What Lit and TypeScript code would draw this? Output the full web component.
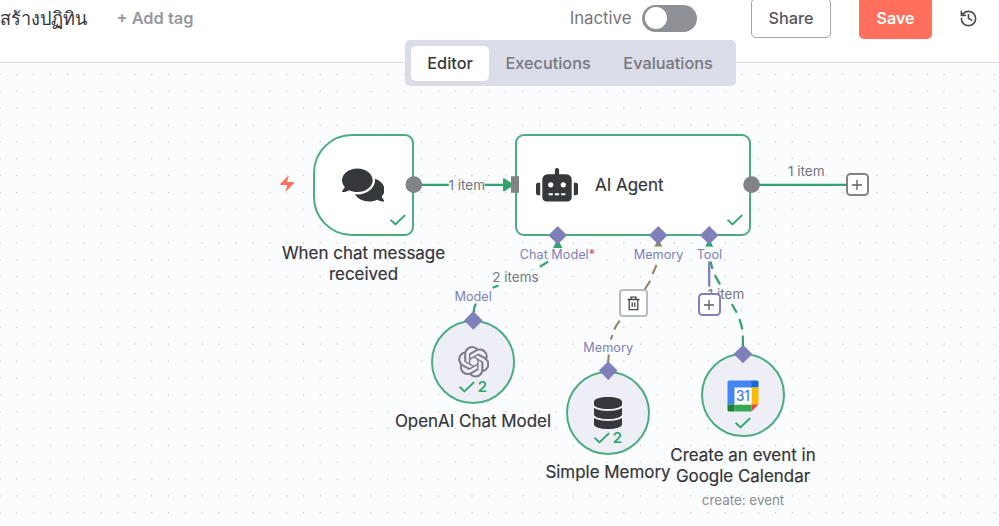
import { LitElement, html, svg, css } from "lit";
import { customElement } from "lit/decorators.js";
import { styleMap } from "lit/directives/style-map.js";

const OPENAI =
  "M22.2819 9.8211a5.9847 5.9847 0 0 0-.5157-4.9108 6.0462 6.0462 0 0 0-6.5098-2.9A6.0651 6.0651 0 0 0 4.9807 4.1818a5.9847 5.9847 0 0 0-3.9977 2.9 6.0462 6.0462 0 0 0 .7427 7.0966 5.98 5.98 0 0 0 .511 4.9107 6.051 6.051 0 0 0 6.5146 2.9001A5.9847 5.9847 0 0 0 13.2599 24a6.0557 6.0557 0 0 0 5.7718-4.2058 5.9894 5.9894 0 0 0 3.9977-2.9001 6.0557 6.0557 0 0 0-.7475-7.0729zm-9.022 12.6081a4.4755 4.4755 0 0 1-2.8764-1.0408l.1419-.0804 4.7783-2.7582a.7948.7948 0 0 0 .3927-.6813v-6.7369l2.02 1.1686a.071.071 0 0 1 .038.052v5.5826a4.504 4.504 0 0 1-4.4945 4.4944zm-9.6607-4.1254a4.4708 4.4708 0 0 1-.5346-3.0137l.142.0852 4.783 2.7582a.7712.7712 0 0 0 .7806 0l5.8428-3.3685v2.3324a.0804.0804 0 0 1-.0332.0615L9.74 19.9502a4.4992 4.4992 0 0 1-6.1408-1.6464zM2.3408 7.8956a4.485 4.485 0 0 1 2.3655-1.9728V11.6a.7664.7664 0 0 0 .3879.6765l5.8144 3.3543-2.0201 1.1685a.0757.0757 0 0 1-.071 0l-4.8303-2.7865A4.504 4.504 0 0 1 2.3408 7.872zm16.5963 3.8558L13.1038 8.364 15.1192 7.2a.0757.0757 0 0 1 .071 0l4.8303 2.7913a4.4944 4.4944 0 0 1-.6765 8.1042v-5.6772a.79.79 0 0 0-.407-.667zm2.0107-3.0231l-.142-.0852-4.7735-2.7818a.7759.7759 0 0 0-.7854 0L9.409 9.2297V6.8974a.0662.0662 0 0 1 .0284-.0615l4.8303-2.7866a4.4992 4.4992 0 0 1 6.6802 4.66zM8.3065 12.863l-2.02-1.1638a.0804.0804 0 0 1-.038-.0567V6.0742a4.4992 4.4992 0 0 1 7.3757-3.4537l-.142.0805L8.704 5.459a.7948.7948 0 0 0-.3927.6813zm1.0976-2.3654l2.602-1.4998 2.6069 1.4998v2.9994l-2.5974 1.4997-2.6067-1.4997Z";
const COMMENTS =
  "M416 192c0-88.4-93.1-160-208-160S0 103.6 0 192c0 34.3 14.1 65.9 38 92-13.4 30.2-35.5 54.2-35.8 54.5-2.2 2.3-2.8 5.7-1.5 8.7S4.8 352 8 352c36.6 0 66.9-12.3 88.7-25 32.2 15.7 70.3 25 111.3 25 114.9 0 208-71.6 208-160zm122 220c23.9-26 38-57.7 38-92 0-66.9-53.5-124.2-129.3-148.1.9 6.6 1.3 13.3 1.3 20.1 0 105.9-107.7 192-240 192-10.8 0-21.3-.8-31.7-1.9C207.8 439.6 281.8 480 368 480c41 0 79.1-9.2 111.3-25 21.8 12.7 52.1 25 88.7 25 3.2 0 6.1-1.9 7.3-4.8 1.3-2.9.7-6.3-1.5-8.7-.3-.3-22.4-24.2-35.8-54.5z";
const ROBOT =
  "M32,224H64V416H32A32,32,0,0,1,0,384V256A32,32,0,0,1,32,224Zm512-48V448a64,64,0,0,1-64,64H160a64,64,0,0,1-64-64V176a80,80,0,0,1,80-80H288V32a32,32,0,0,1,64,0V96H464A80,80,0,0,1,544,176ZM264,256a40,40,0,1,0-40,40A40,40,0,0,0,264,256Zm-8,128H192v32h64Zm96,0H288v32h64ZM456,256a40,40,0,1,0-40,40A40,40,0,0,0,456,256Zm-8,128H384v32h64ZM640,256V384a32,32,0,0,1-32,32H576V224h32A32,32,0,0,1,640,256Z";
const DATABASE =
  "M448 73.143v45.714C448 159.143 347.667 192 224 192S0 159.143 0 118.857V73.143C0 32.857 100.333 0 224 0s224 32.857 224 73.143zM448 176v102.857C448 319.143 347.667 352 224 352S0 319.143 0 278.857V176c48.125 33.143 136.208 48.572 224 48.572S399.874 209.143 448 176zm0 160v102.857C448 479.143 347.667 512 224 512S0 479.143 0 438.857V336c48.125 33.143 136.208 48.572 224 48.572S399.874 369.143 448 336z";

const at = (x: number, y: number) => styleMap({ left: `${x}px`, top: `${y}px` });

const check = html`<svg class="check" viewBox="0 0 16 12">
  <path d="M1.2 6.4 5.4 10.4 14.6 1.6" />
</svg>`;

const plus = html`<svg class="plus" viewBox="0 0 10 10"><path d="M5 0v10M0 5h10" /></svg>`;

interface Label {
  text: string;
  x: number;
  y: number;
  kind: string;
  required?: boolean;
}

const LABELS: Label[] = [
  { text: "1 item", x: 466.7, y: 185, kind: "items filled" },
  { text: "1 item", x: 806.3, y: 171, kind: "items" },
  { text: "2 items", x: 515.4, y: 277, kind: "items filled" },
  { text: "1 item", x: 726, y: 294, kind: "items filled" },
  { text: "Chat Model", x: 557.4, y: 254.4, kind: "port", required: true },
  { text: "Memory", x: 658.6, y: 254.4, kind: "port filled" },
  { text: "Tool", x: 709.4, y: 254.4, kind: "port filled" },
  { text: "Model", x: 473.2, y: 296.2, kind: "port filled" },
  { text: "Memory", x: 608.2, y: 347.4, kind: "port filled" },
];

const DIAMONDS = [
  [557.7, 235.3],
  [658.3, 235.3],
  [709.2, 235.3],
  [473.3, 320.4],
  [608.2, 370.6],
  [743, 354],
];

@customElement("app-root")
export class AppRoot extends LitElement {
  static styles = css`
    :host {
      display: flex;
      flex-direction: column;
      position: relative;
      width: 999px;
      height: 526px;
      overflow: hidden;
      background: #fff;
      font-family: Inter, "Noto Sans", sans-serif;
      color: #343538;
    }
    .header {
      box-sizing: border-box;
      flex: none;
      height: 63px;
      border-bottom: 1px solid #d9dbe9;
      background: #fff;
    }
    .bar {
      display: flex;
      align-items: center;
      height: 36px;
      font-size: 17px;
    }
    .title {
      width: 116.5px;
      white-space: nowrap;
      font-size: 18.1px;
      line-height: 24px;
    }
    .add {
      font-size: 16.4px;
      font-weight: 600;
      color: #97989d;
      margin-right: auto;
    }
    .status {
      font-size: 16.8px;
      color: #75767b;
      margin-right: 10.5px;
    }
    .toggle {
      display: flex;
      align-items: center;
      box-sizing: border-box;
      width: 55px;
      height: 27px;
      padding-left: 3px;
      border-radius: 14px;
      background: #909197;
      margin-right: 54px;
    }
    .knob {
      width: 22px;
      height: 22px;
      border-radius: 50%;
      background: #fff;
    }
    .btn {
      display: flex;
      align-items: center;
      justify-content: center;
      box-sizing: border-box;
      flex: none;
      font-size: 16.3px;
      font-weight: 500;
    }
    .share {
      width: 80px;
      height: 40px;
      border: 1px solid #a3a5b5;
      border-radius: 5px;
      color: #57585c;
      margin-right: 28px;
    }
    .save {
      width: 73px;
      height: 42px;
      border-radius: 5px;
      background: #ff6f5c;
      color: #fff;
      font-weight: 600;
      font-size: 16px;
      margin-right: 27px;
    }
    .history {
      width: 19px;
      height: 19px;
      margin-right: 21px;
      fill: none;
      stroke: #4d4e52;
      stroke-width: 2.1;
      stroke-linecap: round;
      stroke-linejoin: round;
    }
    .tabs {
      position: absolute;
      z-index: 2;
      left: 405px;
      top: 40px;
      display: flex;
      align-items: center;
      box-sizing: border-box;
      width: 331px;
      height: 46px;
      padding: 0 6px;
      border-radius: 5px;
      background: #dadce8;
      font-size: 16.3px;
      font-weight: 500;
      color: #77787e;
    }
    .tab {
      display: flex;
      align-items: center;
      justify-content: center;
      height: 35px;
      padding: 0 16.3px;
      border-radius: 5px;
    }
    .tab.on {
      background: #fff;
      color: #37383b;
    }
    .canvas {
      position: relative;
      flex: 1;
      background-color: #fbfcfe;
      background-image: radial-gradient(circle, #c3c5cc 0.5px, rgba(195, 197, 204, 0) 1.1px);
      background-size: 16.867px 16.867px;
      background-position: 8.4px 3px;
    }
    .layer {
      position: absolute;
      left: 0;
      top: -63px;
      width: 999px;
      height: 526px;
    }
    .node {
      position: absolute;
      box-sizing: border-box;
      border: 2px solid #4bac81;
      background: #fff;
    }
    .trigger {
      width: 101px;
      height: 102px;
      border-radius: 39px 9px 9px 39px;
    }
    .agent {
      width: 236px;
      height: 102px;
      border-radius: 9px;
    }
    .round {
      width: 84px;
      height: 84px;
      border-radius: 50%;
      background: #eeeef7;
    }
    .node svg.glyph {
      position: absolute;
      fill: #37383b;
    }
    .name {
      position: absolute;
      left: 78px;
      top: 37px;
      font-size: 16.95px;
      font-weight: 400;
      line-height: 24px;
      white-space: nowrap;
      -webkit-text-stroke: 0.2px #343538;
    }
    .check {
      width: 16px;
      height: 12px;
      fill: none;
      stroke: #30a46c;
      stroke-width: 2;
      stroke-linecap: round;
      stroke-linejoin: round;
    }
    .corner {
      position: absolute;
      right: 6px;
      bottom: 8px;
      display: flex;
    }
    .runs {
      position: absolute;
      left: 0;
      right: 0;
      bottom: 6px;
      display: flex;
      align-items: center;
      justify-content: center;
      gap: 3px;
      font-size: 15px;
      font-weight: 600;
      line-height: 18px;
      color: #30a46c;
    }
    .caption {
      position: absolute;
      transform: translateX(-50%);
      text-align: center;
      white-space: nowrap;
      font-size: 16.95px;
      font-weight: 400;
      line-height: 21px;
      -webkit-text-stroke: 0.2px #343538;
    }
    .sub {
      font-size: 13.4px;
      font-weight: 400;
      line-height: 26px;
      color: #8d8e94;
      -webkit-text-stroke: 0;
    }
    .label {
      position: absolute;
      transform: translate(-50%, -50%);
      white-space: nowrap;
      font-size: 13.5px;
      line-height: 15px;
    }
    .items {
      color: #75767b;
    }
    .port {
      font-size: 12.7px;
      color: #7f80ba;
    }
    .filled {
      background: rgba(251, 252, 254, 0.92);
    }
    .req {
      color: #e5414b;
    }
    .box {
      position: absolute;
      display: flex;
      align-items: center;
      justify-content: center;
      box-sizing: border-box;
      width: 23px;
      height: 23px;
      border: 2px solid #828388;
      border-radius: 4.5px;
      background: #fff;
    }
    .box.violet {
      border-color: #8182bb;
    }
    .box.trash {
      width: 29px;
      height: 28px;
      border: 2px solid #babbc1;
      border-radius: 4px;
    }
    .plus {
      width: 10px;
      height: 10px;
      fill: none;
      stroke: #5b5c60;
      stroke-width: 1.3;
    }
    .bin {
      width: 13px;
      height: 15px;
      fill: none;
      stroke: #45464a;
      stroke-width: 1.3;
    }
    .date {
      font-size: 14.5px;
      font-weight: 500;
      fill: #3f7de8;
      letter-spacing: -0.3px;
    }
  `;

  private edges() {
    return svg`
      <g fill="none" stroke="#30a46c" stroke-width="2.2">
        <path d="M414 184.8H505M751 184.8H846" />
        <path d="M473.8 312Q474 307 476 303M492.7 287.7 498.5 285.4M527.5 272.5 534 269.9M539.8 266.8 548.2 261.6" />
        <path d="M710.3 260.5 712.4 269M714.8 275 720 284.4M731.8 304 736.8 312.8M739.4 319Q741.6 325 742.3 329.5M742.8 335.5 743 346" />
      </g>
      <path d="M656.5 265 652.6 274M650.3 280.7 644.3 290M619.8 320.7Q616 325.5 614.2 329.5M612.5 335 610.3 341M608.8 353.5 608.1 364"
        fill="none" stroke="#8f8766" stroke-width="2.1" />
      <path d="M709.2 244V248M709.2 261V294" stroke="#7f80ba" stroke-width="2.3" />`;
  }

  private ports() {
    return svg`
      <path d="M504 179.3 512.5 184.8 504 190.3Z" fill="#30a46c" stroke="#30a46c" stroke-width="2" stroke-linejoin="round" />
      <path d="M553 248 557.7 239 562.4 248ZM704.5 248 709.2 239 713.9 248Z" fill="#30a46c" />
      <path d="M653.6 248 658.3 239 663 248Z" fill="#8f8766" />
      <rect x="511" y="176.2" width="8" height="16.6" fill="#828388" />
      <circle cx="413.8" cy="184.6" r="8.4" fill="#828388" />
      <circle cx="751.6" cy="184.6" r="8.4" fill="#828388" />
      ${DIAMONDS.map(
        ([x, y]) => svg`<path d=${`M${x} ${y - 9.3}l9.3 9.3-9.3 9.3-9.3-9.3z`} fill="#7f80ba" />`
      )}
      <svg x="277.9" y="174.3" width="18.5" height="18.5" viewBox="0 0 24 24">
        <path fill="#ff6f5c" d="M4 14a1 1 0 0 1-.78-1.63l9.9-10.2a.5.5 0 0 1 .86.46l-1.92 6.02A1 1 0 0 0 13 10h7a1 1 0 0 1 .78 1.63l-9.9 10.2a.5.5 0 0 1-.86-.46l1.92-6.02A1 1 0 0 0 11 14z" />
      </svg>`;
  }

  render() {
    return html`
      <header class="header">
        <div class="bar">
          <span class="title">สร้างปฏิทิน</span>
          <span class="add">+ Add tag</span>
          <span class="status">Inactive</span>
          <span class="toggle"><span class="knob"></span></span>
          <span class="btn share">Share</span>
          <span class="btn save">Save</span>
          <svg class="history" viewBox="0 0 24 24">
            <path d="M3 12a9 9 0 1 0 9-9 9.75 9.75 0 0 0-6.74 2.74L3 8M3 3v5h5M12 7v5l4 2" />
          </svg>
        </div>
      </header>
      <nav class="tabs">
        <span class="tab on">Editor</span>
        <span class="tab">Executions</span>
        <span class="tab">Evaluations</span>
      </nav>
      <main class="canvas">
        <div class="layer">
          <svg class="layer" style=${at(0, 0)} viewBox="0 0 999 526">${this.edges()}</svg>

          <div class="node trigger" style=${at(313, 134)}>
            <svg class="glyph" style=${at(26.8, 29.6)} width="42.5" height="38" viewBox="0 0 576 512">
              <path d=${COMMENTS} />
            </svg>
            <span class="corner">${check}</span>
          </div>
          <div class="node agent" style=${at(515, 134)}>
            <svg class="glyph" style=${at(19, 32)} width="42" height="33.6" viewBox="0 0 640 512">
              <path d=${ROBOT} />
            </svg>
            <span class="name">AI Agent</span>
            <span class="corner">${check}</span>
          </div>
          <div class="node round" style=${at(431, 320)}>
            <svg class="glyph" style=${at(24.5, 24.3)} width="31.5" height="31.5" viewBox="0 0 24 24">
              <path fill="#7d7d87" d=${OPENAI} />
            </svg>
            <span class="runs">${check}<span>2</span></span>
          </div>
          <div class="node round" style=${at(566, 371)}>
            <svg class="glyph" style=${at(26, 23.5)} width="28" height="32" viewBox="0 0 448 512">
              <path d=${DATABASE} />
            </svg>
            <span class="runs">${check}<span>2</span></span>
          </div>
          <div class="node round" style=${at(701, 353)}>
            <svg class="glyph" style=${at(24.3, 24.5)} width="32" height="32" viewBox="0 0 32 32">
              <path d="M2 .5H25V8H8V24.5H.5V2A1.5 1.5 0 0 1 2 .5Z" fill="#4285f4" />
              <path d="M24.5 .5H30A1.5 1.5 0 0 1 31.5 2V7.5H24.5Z" fill="#1967d2" />
              <path d="M24.5 7.5H31.5V24.5H24.5Z" fill="#fbbc04" />
              <path d="M7.5 24.5H24.5V31.5H7.5Z" fill="#34a853" />
              <path d="M.5 24.5H7.5V31.5H2A1.5 1.5 0 0 1 .5 30Z" fill="#188038" />
              <path d="M24.5 24.5H31.5L24.5 31.5Z" fill="#ea4335" />
              <path d="M7.5 7.5H24.5V24.5H7.5Z" fill="#fff" />
              <text class="date" x="15.8" y="21.3" text-anchor="middle" textLength="13.5" lengthAdjust="spacingAndGlyphs">31</text>
            </svg>
            <span class="runs">${check}</span>
          </div>

          <svg class="layer" style=${at(0, 0)} viewBox="0 0 999 526">${this.ports()}</svg>

          ${LABELS.map(
            (l) => html`<span class="label ${l.kind}" style=${at(l.x, l.y)}
              >${l.text}${l.required ? html`<span class="req">*</span>` : ""}</span
            >`
          )}

          <div class="box" style=${at(845.5, 173.3)}>${plus}</div>
          <div class="box violet" style=${at(697.5, 293.3)}>${plus}</div>
          <div class="box trash" style=${at(619, 289)}>
            <svg class="bin" viewBox="0 0 13 15">
              <path d="M.5 3.5H12.5M4 3.5V1.2H9V3.5M2.2 3.5V13.6H10.8V3.5M5.2 6.3V11M7.8 6.3V11" />
            </svg>
          </div>

          <div class="caption" style=${at(363.5, 242.5)}>When chat message<br />received</div>
          <div class="caption" style=${at(473, 410.5)}>OpenAI Chat Model</div>
          <div class="caption" style=${at(608, 461.5)}>Simple Memory</div>
          <div class="caption" style=${at(743, 444.5)}>
            Create an event in<br />Google Calendar
            <div class="sub">create: event</div>
          </div>
        </div>
      </main>
    `;
  }
}
